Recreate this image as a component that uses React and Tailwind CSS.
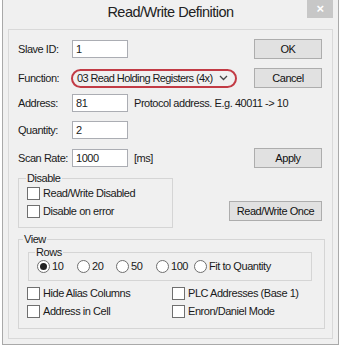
import React from "react";

const Checkbox = ({ label, width }) => (
  <div className={`flex items-center h-[18px] ${width || ""}`}>
    <span className="w-[13px] h-[13px] border border-[#6f6f6f] bg-white shrink-0" />
    <span className="ml-[3px] whitespace-nowrap">{label}</span>
  </div>
);

const Radio = ({ label, checked, width }) => (
  <div className={`flex items-center h-[17px] ${width || ""}`}>
    <span className="w-[13px] h-[13px] rounded-full border border-[#6f6f6f] bg-white shrink-0 flex items-center justify-center">
      {checked && <span className="w-[7px] h-[7px] rounded-full bg-[#222]" />}
    </span>
    <span className="ml-[2px] whitespace-nowrap">{label}</span>
  </div>
);

const Button = ({ children, width = "w-[68px]" }) => (
  <button className={`${width} h-[20px] bg-[#e1e1e1] border border-[#adadad] text-[#111] leading-none whitespace-nowrap`}>
    {children}
  </button>
);

const Field = ({ label, value }) => (
  <div className="flex items-center">
    <span className="w-[54px] whitespace-nowrap">{label}</span>
    <div className="w-[56px] h-[18px] bg-white border border-[#abadb3] pl-[3px] flex items-center">
      {value}
    </div>
  </div>
);

export default function App() {
  return (
    <div className="w-[342px] h-[350px] bg-white font-['Liberation_Sans',Arial,sans-serif] text-[11px] tracking-[-0.45px] text-[#1a1a1a]">
      <div className="ml-[2px] w-[337px] h-[345px] border border-t-0 border-[#a9a9a9] bg-[#f0f0f0] px-[5px]">
        {/* title bar */}
        <div className="relative h-[29px] flex items-center justify-center">
          <span className="text-[14.5px] tracking-[-0.5px] text-[#222] mt-[-3px]">Read/Write Definition</span>
          <div className="absolute top-0 right-0 w-[26px] h-[18px] bg-[#c7c7c7] flex items-center justify-center text-white text-[13px] font-bold">
            ×
          </div>
        </div>

        {/* client area */}
        <div className="h-[310px] border border-[#d9d9d9] bg-[#f0f0f0] pl-[9px] pr-[10px]">
          <div className="flex items-center justify-between h-[20px] mt-[9px]">
            <Field label="Slave ID:" value="1" />
            <Button>OK</Button>
          </div>

          <div className="flex items-center justify-between h-[20px] mt-[9px]">
            <div className="flex items-center">
              <span className="w-[53px]">Function:</span>
              <div className="w-[166px] h-[19px] rounded-full border-2 border-[#c23b45] flex items-center justify-between pl-[4px] pr-[7px]">
                <span className="whitespace-nowrap tracking-[-0.6px]">03 Read Holding Registers (4x)</span>
                <svg width="9" height="6" viewBox="0 0 9 6">
                  <path d="M1 1 L4.5 4.5 L8 1" fill="none" stroke="#444" strokeWidth="1.3" />
                </svg>
              </div>
            </div>
            <Button>Cancel</Button>
          </div>

          <div className="flex items-center h-[18px] mt-[6px]">
            <Field label="Address:" value="81" />
            <span className="ml-[6px] whitespace-nowrap">Protocol address. E.g. 40011 -&gt; 10</span>
          </div>

          <div className="flex items-center h-[18px] mt-[9px]">
            <Field label="Quantity:" value="2" />
          </div>

          <div className="flex items-center justify-between h-[20px] mt-[9px]">
            <div className="flex items-center">
              <Field label="Scan Rate:" value="1000" />
              <span className="ml-[6px]">[ms]</span>
            </div>
            <Button>Apply</Button>
          </div>

          <div className="flex items-end justify-between mt-[4px]">
            <fieldset className="w-[155px] border border-[#d5d5d5] pl-[8px] pb-[7px]">
              <legend className="leading-[12px] px-[1px] ml-[-1px]">Disable</legend>
              <Checkbox label="Read/Write Disabled" />
              <Checkbox label="Disable on error" />
            </fieldset>
            <div className="mb-[7px]">
              <Button width="w-[93px]">Read/Write Once</Button>
            </div>
          </div>

          <fieldset className="w-[307px] mt-[5px] border border-[#d5d5d5] pl-[8px] pr-[12px] pb-[8px]">
            <legend className="leading-[12px] px-[1px] ml-[-4px]">View</legend>
            <fieldset className="ml-[1px] border border-[#d5d5d5] pl-[8px] pb-[5px] mt-[1px]">
              <legend className="leading-[12px] px-[1px] ml-[-2px]">Rows</legend>
              <div className="flex items-center">
                <Radio label="10" checked width="w-[40px]" />
                <Radio label="20" width="w-[39px]" />
                <Radio label="50" width="w-[40px]" />
                <Radio label="100" width="w-[38px]" />
                <Radio label="Fit to Quantity" />
              </div>
            </fieldset>
            <div className="mt-[3px] grid grid-cols-[145px_1fr]">
              <Checkbox label="Hide Alias Columns" />
              <Checkbox label="PLC Addresses (Base 1)" />
              <Checkbox label="Address in Cell" />
              <Checkbox label="Enron/Daniel Mode" />
            </div>
          </fieldset>
        </div>
      </div>
    </div>
  );
}
